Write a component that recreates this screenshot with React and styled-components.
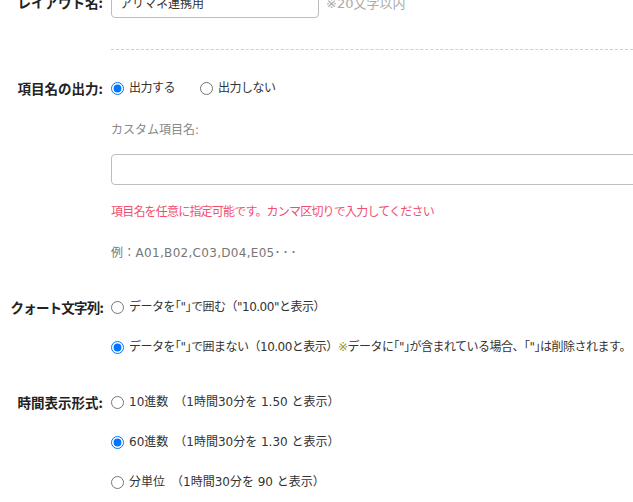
import React from "react";
import styled, { createGlobalStyle } from "styled-components";

const GlobalStyle = createGlobalStyle`
  html, body {
    margin: 0;
    padding: 0;
    background: #fff;
    overflow: hidden;
  }
  body {
    font-family: "DejaVu Sans", "Noto Sans CJK JP", sans-serif;
    color: #333;
  }
`;

const Page = styled.div`
  display: flex;
  flex-direction: column;
  margin-top: -13px;
`;

const Row = styled.div`
  display: grid;
  grid-template-columns: 103px 1fr;
  column-gap: 8px;
  align-items: start;
  margin-top: ${(p) => p.$top || 0}px;
`;

const Label = styled.div`
  font-family: "Noto Sans CJK JP", sans-serif;
  font-size: 13.5px;
  font-weight: bold;
  letter-spacing: ${(p) => p.$spacing || 0}px;
  color: #222;
  text-align: right;
  white-space: nowrap;
  line-height: ${(p) => p.$lh || 20}px;
`;

const Field = styled.div`
  display: flex;
  flex-direction: column;
  min-width: 0;
`;

const InlineField = styled.div`
  display: flex;
  align-items: center;
  gap: 7px;
`;

const TextInput = styled.input`
  box-sizing: border-box;
  height: 31px;
  width: ${(p) => p.$width}px;
  border: 1px solid #bdbdbd;
  border-radius: 4px;
  padding: 0 8px;
  font-family: inherit;
  font-size: 12px;
  color: #333;
  background: #fff;
  margin-top: ${(p) => p.$top || 0}px;
  outline: none;
`;

const Hint = styled.span`
  font-size: 13px;
  color: #aaa;
  white-space: nowrap;
`;

const Divider = styled.div`
  border-top: 1px dashed #d0d0d0;
  height: 0;
`;

const Options = styled.div`
  display: flex;
  flex-direction: ${(p) => (p.$inline ? "row" : "column")};
  gap: ${(p) => (p.$inline ? "25px" : "20px")};
`;

const Option = styled.label`
  display: flex;
  align-items: center;
  gap: 5px;
  font-size: 12px;
  letter-spacing: ${(p) => p.$spacing ?? -0.5}px;
  line-height: 20px;
  height: 20px;
  color: #333;
  white-space: nowrap;
`;

const Radio = styled.input`
  margin: 0;
  width: 13px;
  height: 13px;
  flex: none;
`;

const SubLabel = styled.div`
  font-size: 12px;
  line-height: 20px;
  color: #888;
  margin-top: 22px;
`;

const Note = styled.div`
  font-size: 12px;
  letter-spacing: ${(p) => p.$spacing ?? -0.5}px;
  line-height: 20px;
  color: ${(p) => p.$color || "#333"};
  margin-top: ${(p) => p.$top || 0}px;
  white-space: nowrap;
`;

const Dots = styled.span`
  letter-spacing: 2px;
`;

const Mark = styled.span`
  color: #8b9b3a;
`;

export default function App() {
  return (
    <>
      <GlobalStyle />
      <Page>
        <Row>
          <Label $lh={31}>レイアウト名:</Label>
          <InlineField>
            <TextInput $width={208} defaultValue="アリマネ連携用" />
            <Hint>※20文字以内</Hint>
          </InlineField>
        </Row>

        <Row $top={31}>
          <div />
          <Divider />
        </Row>

        <Row $top={28}>
          <Label>項目名の出力:</Label>
          <Field>
            <Options $inline>
              <Option>
                <Radio type="radio" name="header" defaultChecked />
                <span>出力する</span>
              </Option>
              <Option>
                <Radio type="radio" name="header" />
                <span>出力しない</span>
              </Option>
            </Options>
            <SubLabel>カスタム項目名:</SubLabel>
            <TextInput $width={600} $top={14} />
            <Note $color="#f0506e" $spacing={-0.8} $top={17}>
              項目名を任意に指定可能です。カンマ区切りで入力してください
            </Note>
            <Note $color="#777" $spacing={0.3} $top={21}>
              例：A01,B02,C03,D04,E05<Dots>･･･</Dots>
            </Note>
          </Field>
        </Row>

        <Row $top={34}>
          <Label $spacing={-0.8}>クォート文字列:</Label>
          <Options>
            <Option>
              <Radio type="radio" name="quote" />
              <span>データを｢"｣で囲む（"10.00"と表示）</span>
            </Option>
            <Option>
              <Radio type="radio" name="quote" defaultChecked />
              <span>
                データを｢"｣で囲まない（10.00と表示）<Mark>※</Mark>データに｢"｣が含まれている場合、｢"｣は削除されます。
              </span>
            </Option>
          </Options>
        </Row>

        <Row $top={35}>
          <Label>時間表示形式:</Label>
          <Options>
            <Option $spacing={0}>
              <Radio type="radio" name="time" />
              <span>10進数　（1時間30分を 1.50 と表示）</span>
            </Option>
            <Option $spacing={0}>
              <Radio type="radio" name="time" defaultChecked />
              <span>60進数　（1時間30分を 1.30 と表示）</span>
            </Option>
            <Option $spacing={0}>
              <Radio type="radio" name="time" />
              <span>分単位　（1時間30分を 90 と表示）</span>
            </Option>
          </Options>
        </Row>
      </Page>
    </>
  );
}
